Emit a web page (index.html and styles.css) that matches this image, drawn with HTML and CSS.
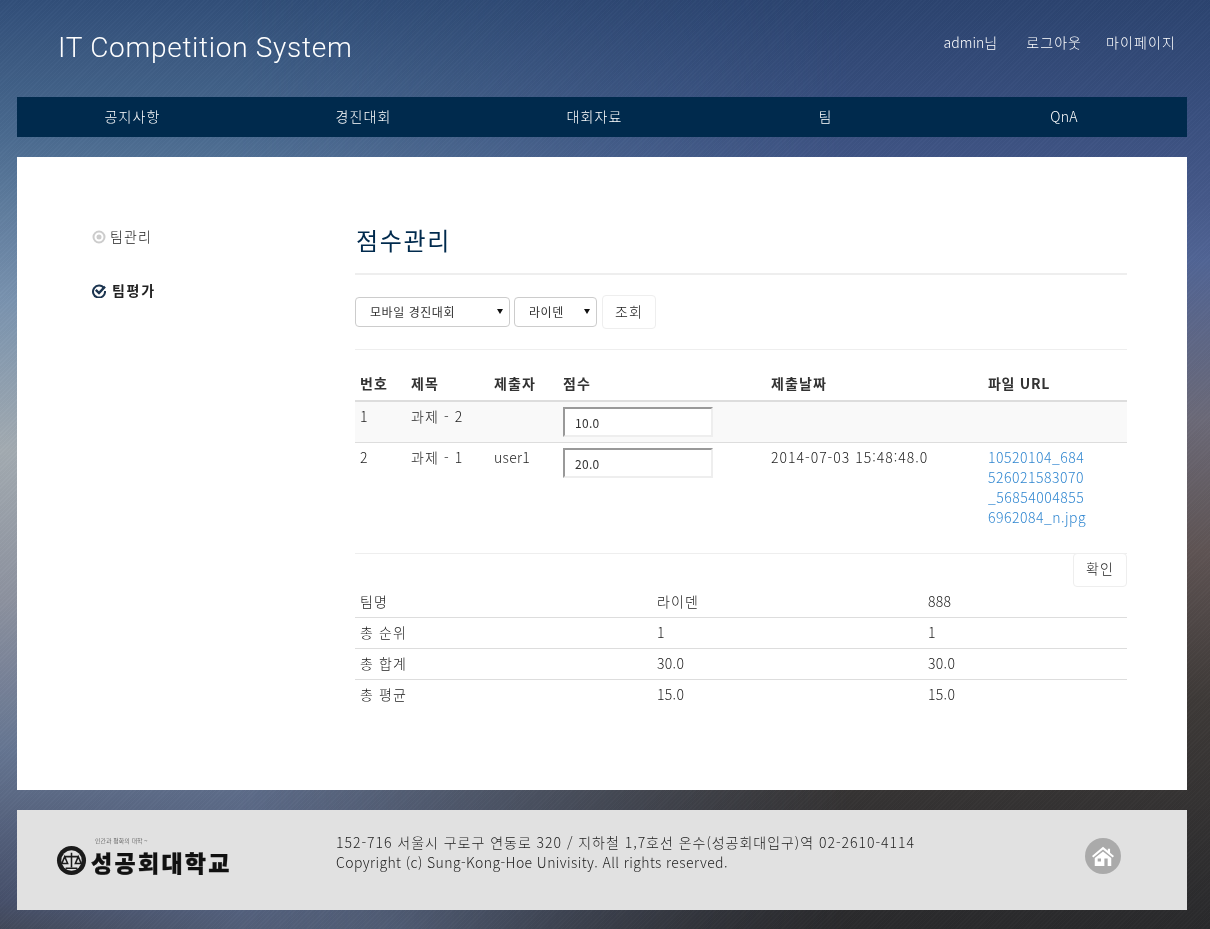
FILE: index.html
```html
<!DOCTYPE html>
<html lang="ko">
<head>
<meta charset="utf-8">
<title>IT Competition System</title>
<link rel="stylesheet" href="styles.css">
</head>
<body>
<div class="page">
  <header class="top">
    <h1 class="brand">IT Competition System</h1>
    <div class="util"><span class="me">admin님</span><a>로그아웃</a><a>마이페이지</a></div>
  </header>
  <nav class="gnb"><a>공지사항</a><a>경진대회</a><a>대회자료</a><a>팀</a><a class="latin">QnA</a></nav>
  <main class="panel">
    <aside class="side">
      <div class="side-item">
        <svg class="ico" viewBox="0 0 14 14"><circle cx="7" cy="7" r="5.5" fill="none" stroke="#ccc" stroke-width="2"/><circle cx="7" cy="7" r="2.5" fill="#ccc"/></svg>
        <span>팀관리</span>
      </div>
      <div class="side-item active">
        <svg class="ico" viewBox="0 0 14 14"><path d="M12 4.2A6 6 0 1 0 13 7" fill="none" stroke="#1c3550" stroke-width="2"/><path d="M3.8 5.8 7 9 13 2.6" fill="none" stroke="#1c3550" stroke-width="2.4"/></svg>
        <span>팀평가</span>
      </div>
    </aside>
    <section class="content">
      <h2 class="title">점수관리</h2>
      <hr class="rule">
      <form class="filter">
        <span class="sel sel-a"><select><option>모바일 경진대회</option></select></span>
        <span class="sel sel-b"><select><option>라이덴</option></select></span>
        <button type="button" class="btn">조회</button>
      </form>
      <hr class="rule thin">
      <table class="scores">
        <colgroup><col class="c1"><col class="c2"><col class="c3"><col class="c4"><col class="c5"><col></colgroup>
        <thead><tr><th>번호</th><th>제목</th><th>제출자</th><th>점수</th><th>제출날짜</th><th class="url">파일 URL</th></tr></thead>
        <tbody>
          <tr class="odd"><td class="latin">1</td><td>과제 - 2</td><td></td><td class="field"><input class="score" value="10.0"></td><td></td><td></td></tr>
          <tr><td class="latin">2</td><td>과제 - 1</td><td class="latin">user1</td><td class="field"><input class="score" value="20.0"></td><td class="date">2014-07-03 15:48:48.0</td><td><a class="file">10520104_684526021583070_568540048556962084_n.jpg</a></td></tr>
        </tbody>
      </table>
      <hr class="rule thin">
      <div class="confirm"><button type="button" class="btn">확인</button></div>
      <table class="summary">
        <colgroup><col class="s1"><col class="s2"><col></colgroup>
        <tbody>
          <tr><td>팀명</td><td>라이덴</td><td class="latin">888</td></tr>
          <tr><td>총 순위</td><td class="latin">1</td><td class="latin">1</td></tr>
          <tr><td>총 합계</td><td class="latin">30.0</td><td class="latin">30.0</td></tr>
          <tr><td>총 평균</td><td class="latin">15.0</td><td class="latin">15.0</td></tr>
        </tbody>
      </table>
    </section>
  </main>
  <footer class="foot">
    <div class="logo">
      <svg class="seal" viewBox="0 0 32 32">
        <circle cx="16" cy="16" r="15" fill="#1b1b1b"/>
        <circle cx="16" cy="16" r="10.5" fill="#e2e2e2"/>
        <path d="M16 8v15M9 12h14M9 12l-3 7h6zM23 12l-3 7h6zM10 24h12" fill="none" stroke="#1b1b1b" stroke-width="1.6"/>
      </svg>
      <div class="logo-text"><small>인간과 평화의 대학 ~</small><strong>성공회대학교</strong></div>
    </div>
    <div class="addr">
      <p class="addr-a">152-716 서울시 구로구 연동로 320 / 지하철 1,7호선 온수(성공회대입구)역 02-2610-4114</p>
      <p class="addr-b">Copyright (c) Sung-Kong-Hoe Univisity. All rights reserved.</p>
    </div>
    <span class="home">
      <svg viewBox="0 0 24 24"><path d="M12 2 0 12l1.4 1.7L12 5l10.6 8.7L24 12l-4.3-3.6V4h-2.4v2.4z" fill="#fff"/><path fill-rule="evenodd" d="M3 14.2 12 7l9 7.2V23h-3.9v-8.2h-3.6V23H3zM6.2 14.8h3.6V18H6.2z" fill="#fff"/></svg>
    </span>
  </footer>
</div>
</body>
</html>
```
FILE: styles.css
```css
* { box-sizing: border-box; }
html {
  margin: 0;
  height: 100%;
  background-color: #47506a;
  background-image:
    radial-gradient(ellipse 420px 210px at 400px 929px, rgba(98,116,150,.85), rgba(98,116,150,0)),
    linear-gradient(180deg, #32507a 0, #4a6a90 130px, #7a94b0 300px, #a4acb2 450px, #8e93a0 600px, #667693 750px, #47506a 900px, #424858 929px);
}
body {
  margin: 0;
  min-height: 100%;
  font-family: "Noto Sans CJK KR", "Liberation Sans", sans-serif;
  font-size: 14px;
  font-weight: 300;
  line-height: 20px;
  letter-spacing: 1.1px;
  color: #222;
}
body::before {
  content: "";
  position: fixed;
  inset: 0;
  z-index: -2;
  background: linear-gradient(180deg, #2c4470 0, #3a5080 120px, #46598a 200px, #516595 260px, #6c6a78 420px, #5f5454 550px, #3e3a38 700px, #2c2c2e 900px, #2a2a2c 929px);
  -webkit-mask-image: linear-gradient(90deg, transparent 20%, #000 70%);
  mask-image: linear-gradient(90deg, transparent 20%, #000 70%);
}
body::after {
  content: "";
  position: fixed;
  inset: 0;
  z-index: -1;
  background: repeating-linear-gradient(135deg, rgba(255,255,255,.014) 0 1px, rgba(0,0,0,.014) 1px 3px);
}
.latin { letter-spacing: .3px; }
.page { width: 1210px; padding: 0 23px 19px 17px; }
.top { height: 97px; display: flex; justify-content: space-between; align-items: flex-start; color: #fff; }
.brand { margin: 30px 0 0 41px; font: 300 28px/36px Roboto, "Liberation Sans", sans-serif; letter-spacing: .7px; color: #fff; }
.util { display: flex; gap: 24px; margin: 32px 12px 0 0; }
.util a:last-child { margin-right: -1px; }
.me { margin-right: 5px; letter-spacing: 0; }
.gnb { height: 40px; background: #002a4d; display: grid; grid-template-columns: repeat(4, 231px) 246px; color: #fff; }
.gnb a { text-align: center; line-height: 38px; }
.panel { margin-top: 20px; height: 633px; background: #fff; display: flex; padding: 0 60px 0 75px; }
.side { width: 263px; padding-top: 69px; }
.side-item { display: flex; align-items: center; gap: 4px; height: 20px; margin-bottom: 34px; }
.side-item.active { font-weight: 700; gap: 6px; letter-spacing: 1.7px; }
.ico { width: 14px; height: 14px; flex: none; margin-top: 2px; }
.content { width: 772px; }
.title { margin: 0 0 0 1px; padding-top: 65px; font-size: 24px; line-height: 36px; font-weight: 400; color: #002a4d; letter-spacing: 1.7px; }
.rule { border: 0; border-top: 2px solid #eee; margin: 15px 0 0; }
.rule.thin { border-top-width: 1px; margin-top: 20px; }
.filter { display: flex; align-items: center; margin-top: 20px; height: 34px; }
.sel { position: relative; display: block; height: 30px; margin-right: 4px; }
.sel::after { content: ""; position: absolute; right: 7px; top: 12px; border: 3px solid transparent; border-top: 5px solid #111; border-bottom: 0; }
.sel select { appearance: none; -webkit-appearance: none; width: 100%; height: 30px; border: 1px solid #ccc; border-radius: 4px; background: #fff; color: #333; font: 400 12px "Noto Sans CJK KR", sans-serif; letter-spacing: .55px; padding: 0 14px 2px; }
.sel-a { width: 155px; }
.sel-b { width: 83px; margin-right: 5px; }
.btn { width: 54px; height: 34px; padding: 0 0 2px; border: 1px solid #eee; border-radius: 4px; background: #fff; color: #222; font: 300 14px "Noto Sans CJK KR", sans-serif; letter-spacing: 1.1px; }
.confirm .btn { padding-bottom: 4px; }
.scores { width: 772px; border-collapse: collapse; table-layout: fixed; margin-top: 20px; }
.c1 { width: 51px; } .c2 { width: 83px; } .c3 { width: 69px; } .c4 { width: 208px; } .c5 { width: 217px; }
.scores th { text-align: left; padding: 3px 5px 7px; height: 31px; font-weight: 700; border-bottom: 2px solid #ddd; color: #333; line-height: 20px; }
.scores th.url { letter-spacing: .7px; }
.scores td { padding: 4px 5px 6px; vertical-align: top; border-top: 1px solid #ddd; }
.scores tbody tr:first-child td { border-top: 0; }
.scores td.field { padding: 5px; }
.odd td { background: #f9f9f9; }
.date { letter-spacing: 1px; }
.score { display: block; width: 150px; height: 30px; padding: 0 10px; font: 400 12px "Noto Sans CJK KR", sans-serif; letter-spacing: .3px; color: #333; background: #fff; border: 2px solid; border-color: #999 #eee #eee #999; }
.file { display: block; width: 100px; color: #2f86d0; word-break: break-all; letter-spacing: .5px; }
.confirm { display: flex; justify-content: flex-end; height: 32px; margin-top: -1px; }
.summary { width: 772px; border-collapse: collapse; table-layout: fixed; }
.s1 { width: 297px; } .s2 { width: 271px; }
.summary td { padding: 4px 5px 6px; height: 31px; border-top: 1px solid #ddd; }
.summary tr:first-child td { border-top: 0; height: 32px; padding: 5px; }
.foot { margin-top: 20px; height: 100px; background: #e1e1e1; display: flex; align-items: flex-start; position: relative; }
.logo { width: 319px; display: flex; align-items: flex-start; padding: 27px 0 0 39px; }
.seal { width: 31px; height: 31px; margin-top: 8px; flex: none; }
.logo-text { margin-left: 4px; display: flex; flex-direction: column; }
.logo-text small { font-size: 6px; line-height: 8px; color: #333; margin-left: 4px; letter-spacing: 0; }
.logo-text strong { margin-top: 3px; font-size: 23px; line-height: 28px; font-weight: 900; color: #111; letter-spacing: 2.3px; -webkit-text-stroke: .3px #111; }
.addr { padding-top: 22px; color: #222; }
.addr p { margin: 0; line-height: 20px; }
.addr-a { letter-spacing: .97px; }
.addr-b { letter-spacing: .4px; }
.home { position: absolute; left: 1068px; top: 28px; width: 36px; height: 36px; border-radius: 50%; background: #aaa; display: flex; align-items: center; justify-content: center; }
.home svg { width: 22px; height: 22px; }
```
